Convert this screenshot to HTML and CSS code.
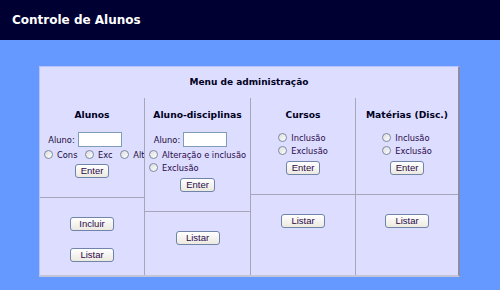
FILE: index.html
```html
<!DOCTYPE html>
<html>
<head>
    <title>Controle de Alunos</title>
    <link rel="stylesheet" href="styles.css">
</head>
<body>
    <div class="topo">Controle de Alunos</div>

    <div class="painel">
        <div class="titulo">Menu de administração</div>
        <div class="colunas">
            <!-- Alunos -->
            <div class="coluna">
                <div class="cima">
                    <h2>Alunos</h2>
                    <div class="campo">
                        <label for="aluno1">Aluno:</label>
                        <input type="text" id="aluno1">
                    </div>
                    <div class="linha">
                        <input type="radio" name="op1" id="cons"><label for="cons">Cons</label>
                        <input type="radio" name="op1" id="exc"><label for="exc">Exc</label>
                        <input type="radio" name="op1" id="alt"><label for="alt">Alt</label>
                    </div>
                    <button class="btn">Enter</button>
                </div>
                <div class="baixo">
                    <button class="btn largo">Incluir</button>
                    <button class="btn largo">Listar</button>
                </div>
            </div>

            <!-- Aluno-disciplinas -->
            <div class="coluna">
                <div class="cima">
                    <h2>Aluno-disciplinas</h2>
                    <div class="campo">
                        <label for="aluno2">Aluno:</label>
                        <input type="text" id="aluno2">
                    </div>
                    <div class="opcoes">
                        <div><input type="radio" name="op2" id="altinc"><label for="altinc">Alteração e inclusão</label></div>
                        <div><input type="radio" name="op2" id="exc2"><label for="exc2">Exclusão</label></div>
                    </div>
                    <button class="btn">Enter</button>
                </div>
                <div class="baixo">
                    <button class="btn largo">Listar</button>
                </div>
            </div>

            <!-- Cursos -->
            <div class="coluna">
                <div class="cima">
                    <h2>Cursos</h2>
                    <div class="opcoes">
                        <div><input type="radio" name="op3" id="inc3"><label for="inc3">Inclusão</label></div>
                        <div><input type="radio" name="op3" id="exc3"><label for="exc3">Exclusão</label></div>
                    </div>
                    <button class="btn">Enter</button>
                </div>
                <div class="baixo">
                    <button class="btn largo">Listar</button>
                </div>
            </div>

            <!-- Materias -->
            <div class="coluna">
                <div class="cima">
                    <h2>Matérias (Disc.)</h2>
                    <div class="opcoes">
                        <div><input type="radio" name="op4" id="inc4"><label for="inc4">Inclusão</label></div>
                        <div><input type="radio" name="op4" id="exc4"><label for="exc4">Exclusão</label></div>
                    </div>
                    <button class="btn">Enter</button>
                </div>
                <div class="baixo">
                    <button class="btn largo">Listar</button>
                </div>
            </div>
        </div>
    </div>
</body>
</html>
```

FILE: styles.css
```css
body {
    margin: 0;
    background-color: #6699ff;
    font-family: "DejaVu Sans", Verdana, sans-serif;
    color: #1a0a3a;
}

.topo {
    height: 40px;
    line-height: 40px;
    padding-left: 12px;
    background-color: #000033;
    color: #ffffff;
    font-weight: bold;
    font-size: 12px;
}

.painel {
    width: 418px;
    margin: 26px 0 0 39px;
    height: 208px;
    background-color: #ddddff;
    border-top: 1px solid #b4c4ff;
    border-left: 1px solid #b4c4ff;
    border-right: 2px solid #8c8ca4;
    border-bottom: 2px solid #c4c4d8;
    display: flex;
    flex-direction: column;
}

.titulo {
    height: 31px;
    line-height: 31px;
    text-align: center;
    font-weight: bold;
    font-size: 9px;
    color: #000022;
}

.colunas {
    flex: 1;
    display: grid;
    grid-template-columns: 104px 106px 105px 103px;
}

.coluna {
    display: flex;
    flex-direction: column;
    border-left: 1px solid #a6a6b8;
    text-align: center;
}

.coluna:first-child {
    border-left: none;
}

.cima {
    padding: 9px 0 19px;
}

.baixo {
    flex: 1;
    border-top: 1px solid #a6a6b8;
    padding-top: 19px;
    display: flex;
    flex-direction: column;
    align-items: center;
    gap: 17px;
}

h2 {
    margin: 0 0 10px;
    font-size: 9.2px;
    line-height: 15px;
    color: #000022;
}

.campo {
    font-size: 8.3px;
    height: 15px;
    display: flex;
    justify-content: center;
    align-items: center;
    gap: 3px;
    padding-right: 14px;
}

input[type="text"] {
    width: 44px;
    height: 15px;
    box-sizing: border-box;
    border: 1px solid #7f9db9;
    background: #ffffff;
    margin: 0;
    padding: 0;
}

input[type="radio"] {
    appearance: none;
    width: 9px;
    height: 9px;
    margin: 0 4px 0 0;
    border: 1px solid #7c8aa0;
    border-radius: 50%;
    background: linear-gradient(135deg, #dcdcdc, #ffffff);
    vertical-align: -1px;
}

.linha {
    font-size: 8.3px;
    line-height: 13px;
    margin-top: 2px;
    white-space: nowrap;
    text-align: left;
    padding-left: 4px;
}

.linha label {
    margin-right: 5px;
}

.opcoes {
    display: inline-block;
    text-align: left;
    font-size: 8.3px;
    line-height: 13px;
    margin-top: 2px;
    white-space: nowrap;
    color: #2a0a4a;
}

.cima h2 + .opcoes {
    margin-top: 0;
}

.btn {
    display: block;
    margin: 2px auto 0;
    height: 14px;
    padding: 0 5px;
    font-family: "Liberation Sans", Arial, sans-serif;
    font-size: 9.5px;
    line-height: 12px;
    color: #2a0a4a;
    border: 1px solid #6f84a8;
    border-radius: 3px;
    background: linear-gradient(#ffffff, #ece9e0);
}

.opcoes + .btn {
    margin-top: 3px;
}

.largo {
    width: 44px;
    margin: 0;
}
```
